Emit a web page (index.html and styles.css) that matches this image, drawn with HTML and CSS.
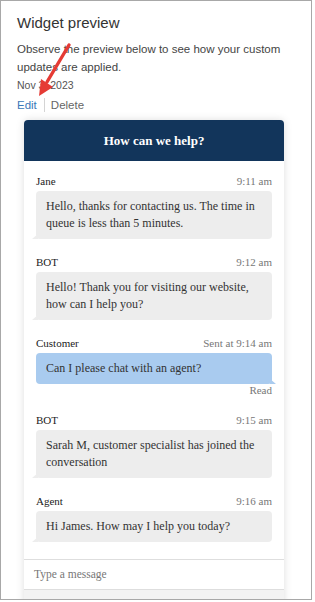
FILE: index.html
```html
<!DOCTYPE html>
<html lang="en">
<head>
  <meta charset="UTF-8">
  <meta name="viewport" content="width=device-width, initial-scale=1.0">
  <title>Widget preview</title>
  <link rel="stylesheet" href="styles.css">
</head>
<body>
  <div class="panel">
    <h1 class="title">Widget preview</h1>
    <p class="intro">Observe the preview below to see how your custom updates are applied.</p>
    <div class="date">Nov 3, 2023</div>
    <div class="actions">
      <a class="edit">Edit</a>
      <span class="sep"></span>
      <a class="delete">Delete</a>
    </div>

    <!-- red callout arrow pointing at Edit -->
    <svg class="arrow" width="80" height="100" viewBox="0 0 80 100">
      <line x1="68" y1="44" x2="46" y2="81" stroke="#e53b35" stroke-width="3.4" stroke-linecap="round"/>
      <polygon points="38,95 52,86 40,78" fill="#e53b35"/>
    </svg>

    <div class="widget">
      <div class="widget-head">How can we help?</div>
      <div class="messages">
        <div class="msg">
          <div class="meta"><span class="who">Jane</span><span class="time">9:11 am</span></div>
          <div class="bubble">Hello, thanks for contacting us. The time in queue is less than 5 minutes.</div>
        </div>
        <div class="msg">
          <div class="meta"><span class="who">BOT</span><span class="time">9:12 am</span></div>
          <div class="bubble">Hello! Thank you for visiting our website, how can I help you?</div>
        </div>
        <div class="msg">
          <div class="meta"><span class="who">Customer</span><span class="time">Sent at 9:14 am</span></div>
          <div class="bubble mine">Can I please chat with an agent?</div>
          <div class="read">Read</div>
        </div>
        <div class="msg">
          <div class="meta"><span class="who">BOT</span><span class="time">9:15 am</span></div>
          <div class="bubble">Sarah M, customer specialist has joined the conversation</div>
        </div>
        <div class="msg">
          <div class="meta"><span class="who">Agent</span><span class="time">9:16 am</span></div>
          <div class="bubble">Hi James. How may I help you today?</div>
        </div>
      </div>
      <div class="composer">Type a message</div>
      <div class="widget-foot"></div>
    </div>
  </div>
</body>
</html>
```

FILE: styles.css
```css
body {
  margin: 0;
  background: #fff;
  font-family: Arial, "Liberation Sans", sans-serif;
}

.panel {
  position: relative;
  width: 312px;
  height: 600px;
  border: 1px solid #a8a8a8;
  overflow: hidden;
  padding-left: 16px;
  box-sizing: border-box;
}

.title {
  margin: 0;
  padding-top: 12px;
  font-size: 15px;
  font-weight: normal;
  color: #333;
  line-height: 20px;
}

.intro {
  margin: 7px 0 0;
  font-size: 11.5px;
  line-height: 18px;
  color: #444;
  width: 285px;
}

.date {
  margin-top: 2px;
  font-size: 10.5px;
  line-height: 15px;
  color: #555;
}

.actions {
  display: flex;
  align-items: center;
  margin-top: 4px;
  height: 16px;
  font-size: 11.5px;
}

.edit {
  color: #3b78b8;
}

.sep {
  width: 1px;
  height: 14px;
  background: #d4d4d4;
  margin: 0 6px 0 7px;
}

.delete {
  color: #666;
}

.arrow {
  position: absolute;
  left: 0;
  top: 0;
}

.widget {
  width: 260px;
  margin: 7px 0 0 7px;
  border-radius: 4px 4px 0 0;
  box-shadow: 0 0 9px rgba(0, 0, 0, 0.13);
  background: #fff;
  font-family: "Liberation Serif", "Times New Roman", serif;
}

.widget-head {
  height: 41px;
  line-height: 41px;
  background: #12355b;
  color: #fff;
  text-align: center;
  font-size: 13px;
  font-weight: bold;
  border-radius: 4px 4px 0 0;
}

.messages {
  padding: 13px 12px 17px;
  display: flex;
  flex-direction: column;
  gap: 16px;
}

.meta {
  display: flex;
  justify-content: space-between;
  font-size: 11px;
  line-height: 14px;
  margin-bottom: 3px;
}

.who {
  color: #222;
}

.time {
  color: #777;
}

.bubble {
  position: relative;
  background: #ededed;
  border-radius: 4px;
  padding: 7px 10px;
  font-size: 12px;
  line-height: 17px;
  color: #333;
}

.bubble::before {
  content: "";
  position: absolute;
  left: -4px;
  bottom: 0;
  border-style: solid;
  border-width: 0 0 5px 6px;
  border-color: transparent transparent #ededed transparent;
}

.bubble.mine {
  background: #a9cbef;
  color: #333;
}

.bubble.mine::before {
  left: auto;
  right: -4px;
  border-width: 0 6px 5px 0;
  border-color: transparent transparent #a9cbef transparent;
}

.read {
  text-align: right;
  font-size: 11px;
  line-height: 13px;
  color: #777;
}

.composer {
  height: 29px;
  line-height: 29px;
  padding-left: 10px;
  border-top: 1px solid #dedede;
  border-bottom: 1px solid #dedede;
  font-size: 11.5px;
  color: #777;
}

.widget-foot {
  height: 20px;
  background: #f3f3f3;
}
```
